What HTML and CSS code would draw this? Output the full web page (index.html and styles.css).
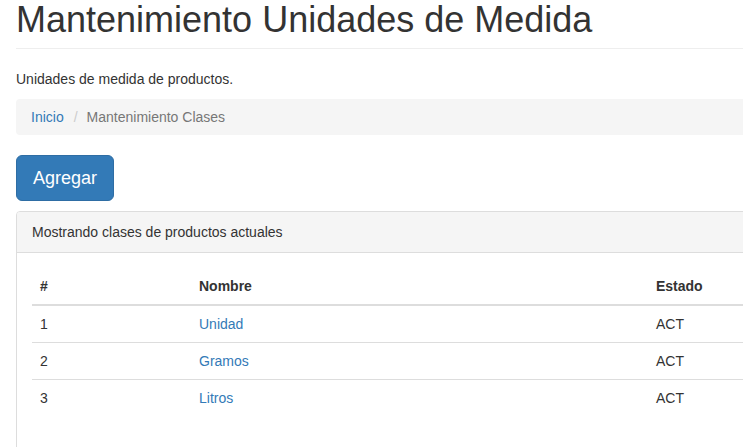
FILE: index.html
```html
<!DOCTYPE html>
<html lang="es">
<head>
<meta charset="utf-8">
<title>Mantenimiento Unidades de Medida</title>
<link rel="stylesheet" href="styles.css">
</head>
<body>
<div class="container">
  <div class="page-header">
    <h1>Mantenimiento Unidades de Medida</h1>
  </div>
  <p class="lead-text">Unidades de medida de productos.</p>
  <ol class="breadcrumb">
    <li><a href="#">Inicio</a></li>
    <li class="sep">/</li>
    <li class="active">Mantenimiento Clases</li>
  </ol>
  <div class="actions">
    <a class="btn btn-primary btn-lg" href="#">Agregar</a>
  </div>
  <div class="panel">
    <div class="panel-heading">Mostrando clases de productos actuales</div>
    <div class="panel-body">
      <table class="table">
        <thead>
          <tr>
            <th class="col-id">#</th>
            <th class="col-name">Nombre</th>
            <th class="col-state">Estado</th>
          </tr>
        </thead>
        <tbody>
          <tr><td>1</td><td><a href="#">Unidad</a></td><td>ACT</td></tr>
          <tr><td>2</td><td><a href="#">Gramos</a></td><td>ACT</td></tr>
          <tr><td>3</td><td><a href="#">Litros</a></td><td>ACT</td></tr>
        </tbody>
      </table>
    </div>
  </div>
</div>
</body>
</html>
```
FILE: styles.css
```css
html, body {
  margin: 0;
  padding: 0;
  overflow: hidden;
  background: #fff;
}
body {
  font-family: "Liberation Sans", Arial, sans-serif;
  font-size: 14px;
  line-height: 20px;
  color: #333;
}
a {
  color: #337ab7;
  text-decoration: none;
}
.container {
  width: 940px;
  padding: 0 16px;
}
.page-header {
  padding-bottom: 8px;
  margin: 0 0 20px;
  border-bottom: 1px solid #eee;
}
.page-header h1 {
  margin: 0;
  font-size: 36px;
  font-weight: 500;
  line-height: 1.1;
  color: #333;
}
.lead-text {
  margin: 0 0 10px;
}
.breadcrumb {
  display: flex;
  list-style: none;
  margin: 0 0 20px;
  padding: 8px 15px;
  background: #f5f5f5;
  border-radius: 4px;
}
.breadcrumb .sep {
  color: #ccc;
  padding: 0 9px 0 10px;
}
.breadcrumb .active {
  color: #777;
}
.actions {
  margin-bottom: 10px;
}
.btn {
  display: inline-block;
  border: 1px solid transparent;
}
.btn-primary {
  color: #fff;
  background: #337ab7;
  border-color: #2e6da4;
}
.btn-lg {
  padding: 10px 16px;
  font-size: 18px;
  line-height: 24px;
  border-radius: 6px;
}
.panel {
  border: 1px solid #ddd;
  border-radius: 4px;
  background: #fff;
}
.panel-heading {
  padding: 10px 15px;
  background: #f5f5f5;
  border-bottom: 1px solid #ddd;
  border-radius: 3px 3px 0 0;
  color: #333;
}
.panel-body {
  padding: 15px;
}
.table {
  width: 100%;
  border-collapse: collapse;
  border-spacing: 0;
  margin-bottom: 20px;
}
.table th {
  text-align: left;
  font-weight: bold;
  padding: 8px;
  border-bottom: 2px solid #ddd;
}
.table td {
  padding: 8px;
  border-top: 1px solid #ddd;
}
.col-id { width: 143px; }
.col-name { width: 441px; }
```
